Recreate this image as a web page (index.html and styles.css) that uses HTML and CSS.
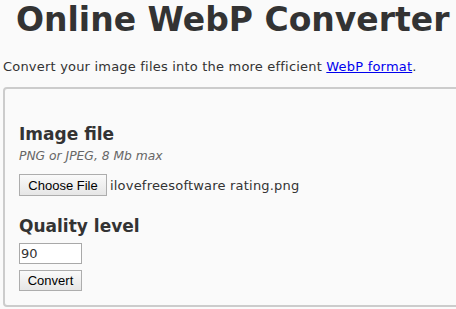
FILE: index.html
```html
<!DOCTYPE html>
<html lang="en">
<head>
    <meta charset="UTF-8">
    <meta name="viewport" content="width=device-width, initial-scale=1.0">
    <title>Online WebP Converter</title>
    <link rel="stylesheet" href="styles.css">
</head>
<body>
    <h1 class="title">Online WebP Converter</h1>
    <p class="intro">Convert your image files into the more efficient <a href="#" class="intro-link">WebP format</a>.</p>

    <form class="convert-box">
        <div class="form-group">
            <h2 class="form-label">Image file</h2>
            <p class="form-hint">PNG or JPEG, 8 Mb max</p>
            <div class="file-row">
                <button type="button" class="win-button file-button">Choose File</button>
                <span class="file-name">ilovefreesoftware rating.png</span>
            </div>
        </div>
        <div class="form-group">
            <h2 class="form-label">Quality level</h2>
            <input type="text" class="form-input" value="90">
            <button type="submit" class="win-button convert-button">Convert</button>
        </div>
    </form>
</body>
</html>
```

FILE: styles.css
```css
* {
    margin: 0;
    padding: 0;
    box-sizing: border-box;
}

body {
    background: #fafafa;
    color: #333;
    font-family: "DejaVu Sans", Verdana, sans-serif;
    padding: 0 0 0 3px;
    overflow: hidden;
}

.title {
    font-size: 33px;
    font-weight: bold;
    padding-left: 13px;
    white-space: nowrap;
}

.intro {
    font-size: 13px;
    line-height: 15px;
    letter-spacing: 0.2px;
    margin-top: 20px;
    white-space: nowrap;
}

.intro-link {
    color: #00e;
}

.convert-box {
    margin-top: 13px;
    width: 500px;
    height: 220px;
    border: 2px solid #ccc;
    border-radius: 4px;
    background: #fafafa;
    padding: 34px 14px 0;
}

.form-group + .form-group {
    margin-top: 19px;
}

.form-label {
    font-size: 17px;
    font-weight: bold;
    line-height: 22px;
}

.form-hint {
    font-size: 12.3px;
    line-height: 16px;
    font-style: italic;
    color: #666;
    margin-top: 3px;
}

.file-row {
    display: flex;
    align-items: center;
    gap: 3px;
    margin-top: 10px;
}

.file-name {
    font-size: 13px;
    letter-spacing: 0.2px;
}

.win-button {
    font-family: "Liberation Sans", Arial, sans-serif;
    font-size: 13px;
    color: #000;
    background: linear-gradient(#fafafa, #e6e6e6);
    border: 1px solid #adadad;
    border-radius: 0;
    display: block;
}

.file-button {
    width: 88px;
    height: 22px;
}

.form-input {
    display: block;
    width: 63px;
    height: 21px;
    border: 1px solid #a9a9a9;
    background: #fff;
    font-family: "DejaVu Sans", Verdana, sans-serif;
    font-size: 13px;
    padding: 0 1px;
    color: #333;
    margin-top: 6px;
}

.convert-button {
    width: 63px;
    height: 21px;
    margin-top: 6px;
}
```
